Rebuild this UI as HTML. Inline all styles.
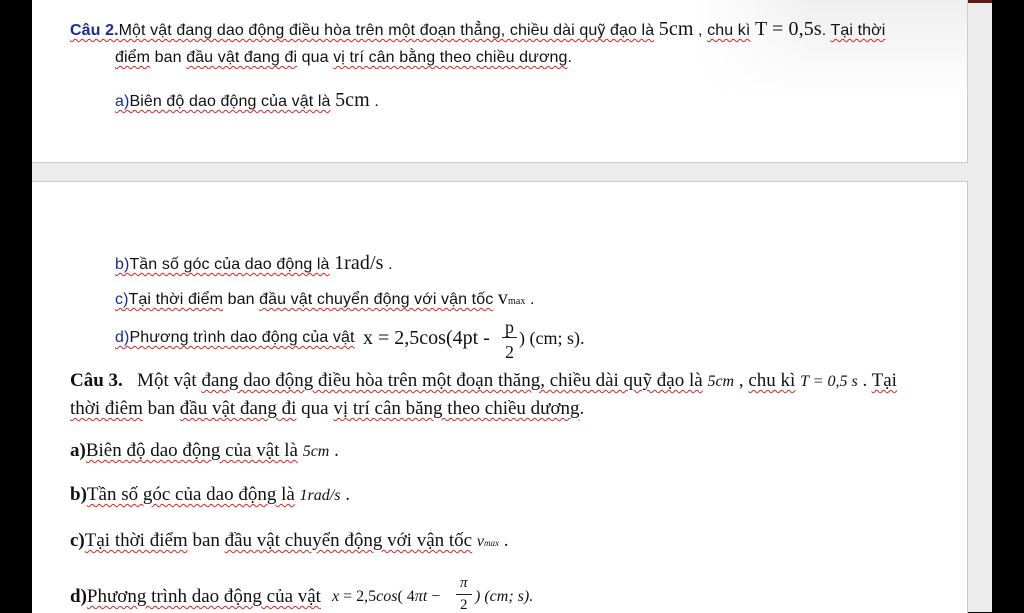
<!DOCTYPE html>
<html><head><meta charset="utf-8"><style>
body{margin:0;width:1024px;height:612px;overflow:hidden;background:#000;position:relative;font-family:"Liberation Sans",sans-serif}
.pg{position:absolute;background:#fff}
.t{position:absolute;white-space:nowrap;color:#111;line-height:1}
.s{font-family:"Liberation Sans",sans-serif;font-size:16px;letter-spacing:0.1px}
.r{font-family:"Liberation Serif",serif;font-size:19px}
.w{text-decoration:underline wavy #d22;text-decoration-thickness:1px;text-underline-offset:3px}
.bl{color:#1a2a9a}
.m{font-family:"Liberation Serif",serif;font-size:20px}
i{font-family:"Liberation Serif",serif}
</style></head><body>
<div class="pg" style="left:32px;top:0;width:960px;height:612px;background:#ececec"></div>
<div style="position:absolute;left:900px;top:0;width:92px;height:3px;background:#5a1a10"></div>
<div class="pg" style="left:32px;top:0;width:935px;height:162px;border-right:1px solid #ccc;border-bottom:1px solid #ccc;background:linear-gradient(180deg,#efefef 0,#fff 100px)"></div>
<div class="pg" style="left:32px;top:0;width:780px;height:162px;background:linear-gradient(90deg,#fff 85%,rgba(255,255,255,0))"></div>
<div class="pg" style="left:32px;top:181px;width:935px;height:431px;border-top:1px solid #ccc;border-right:1px solid #ccc"></div>

<div class="t s" style="left:70px;top:19px"><b class="bl w">Câu 2.</b><span class="w">Một vật đang dao động điều hòa trên một đoạn thẳng, chiều dài quỹ đạo là</span> <span class="m">5cm</span> , <span class="w">chu kì</span> <span class="m">T = 0,5s</span>. <span class="w">Tại thời</span></div>
<div class="t s" style="left:115px;top:50px"><span class="w">điểm</span> ban <span class="w">đầu vật đang đi</span> qua <span class="w">vị trí cân bằng theo chiều dương</span>.</div>
<div class="t s" style="left:115px;top:90px"><span class="w bl">a)</span><span class="w">Biên độ dao động của vật là</span> <span class="m">5cm</span> .</div>

<div class="t s" style="left:115px;top:253px"><span class="w bl">b)</span><span class="w">Tần số góc của dao động là</span> <span class="m">1rad/s</span> .</div>
<div class="t s" style="left:115px;top:288px"><span class="w bl">c)</span><span class="w">Tại thời điểm</span> ban <span class="w">đầu vật chuyển động với vận tốc</span> <span class="m">v</span><span style="font-family:'Liberation Serif';font-size:10px">max</span> .</div>
<div class="t s" style="left:115px;top:330px"><span class="w bl">d)</span><span class="w">Phương trình dao động của vật</span></div>
<div class="t m" style="left:363px;top:328px">x = 2,5cos(4pt -</div>
<div class="t m" style="left:505px;top:318px;font-size:18px">p</div>
<div style="position:absolute;left:502px;top:337px;width:15px;height:1px;background:#222"></div>
<div class="t m" style="left:505px;top:343px;font-size:18px">2</div>
<div class="t m" style="left:519px;top:329px;font-size:18px">) (cm; s).</div>

<div class="t r" style="left:70px;top:371px"><b>Câu 3.</b>&nbsp;&nbsp; Một vật <span class="w">đang dao động điều hòa trên một đoạn thăng, chiều dài quỹ đạo là</span> <i style="font-size:16px">5cm</i> , <span class="w">chu kì</span> <i style="font-size:16px">T = 0,5 s</i> . <span class="w">Tại</span></div>
<div class="t r" style="left:70px;top:399px"><span class="w">thời điêm</span> ban <span class="w">đầu vật đang đi</span> qua <span class="w">vị trí cân băng theo chiều dương</span>.</div>
<div class="t r" style="left:70px;top:441px"><b>a)</b><span class="w">Biên độ dao động của vật là</span> <i style="font-size:16px">5cm</i> .</div>
<div class="t r" style="left:70px;top:485px"><b>b)</b><span class="w">Tần số góc của dao động là</span> <i style="font-size:16px">1rad/s</i> .</div>
<div class="t r" style="left:70px;top:531px"><b>c)</b><span class="w">Tại thời điểm</span> ban <span class="w">đầu vật chuyển động với vận tốc</span> <i style="font-size:16px">v</i><i style="font-size:9px">max</i> .</div>
<div class="t r" style="left:70px;top:587px"><b>d)</b><span class="w">Phương trình dao động của vật</span></div>
<div class="t" style="left:332px;top:589px;font-family:'Liberation Serif',serif;font-size:16px"><i>x</i> = 2,5<i>cos</i>( 4<i>πt</i> −</div>
<div class="t" style="left:460px;top:576px;font-family:'Liberation Serif',serif;font-size:15px"><i>π</i></div>
<div style="position:absolute;left:456px;top:594px;width:16px;height:1px;background:#222"></div>
<div class="t" style="left:460px;top:598px;font-family:'Liberation Serif',serif;font-size:15px">2</div>
<div class="t" style="left:475px;top:589px;font-family:'Liberation Serif',serif;font-size:16px"><i>) (cm; s).</i></div>
</body></html>
